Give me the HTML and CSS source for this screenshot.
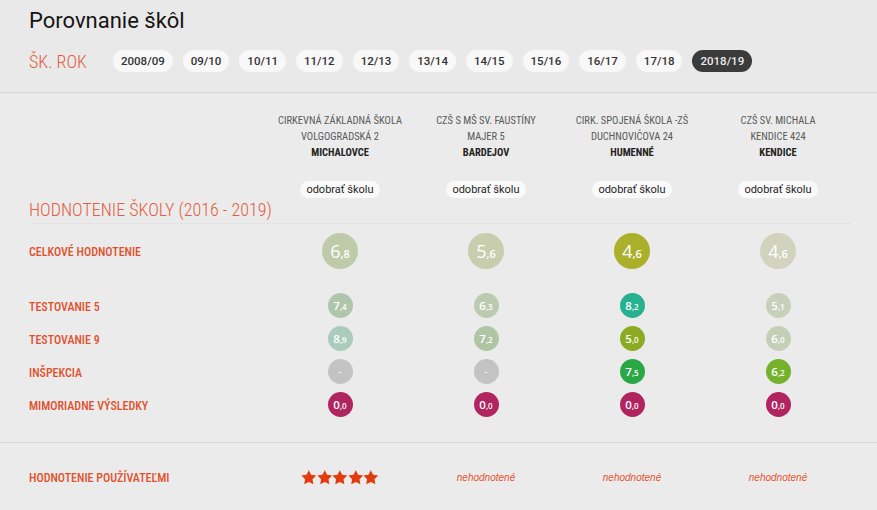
FILE: index.html
```html
<!DOCTYPE html>
<html lang="sk">
<head>
<meta charset="utf-8">
<title>Porovnanie škôl</title>
<link rel="stylesheet" href="styles.css">
</head>
<body>
<header class="top">
  <h1 class="title">Porovnanie škôl</h1>
  <div class="years">
    <span class="years-label">ŠK. ROK</span>
    <ul class="pills">
      <li class="pill">2008/09</li>
      <li class="pill">09/10</li>
      <li class="pill">10/11</li>
      <li class="pill">11/12</li>
      <li class="pill">12/13</li>
      <li class="pill">13/14</li>
      <li class="pill">14/15</li>
      <li class="pill">15/16</li>
      <li class="pill">16/17</li>
      <li class="pill">17/18</li>
      <li class="pill pill-active">2018/19</li>
    </ul>
  </div>
</header>

<main class="compare">
  <div class="grid schools">
    <div class="cell-label"></div>
    <div class="school">
      <span class="school-line">CIRKEVNÁ ZÁKLADNÁ ŠKOLA</span>
      <span class="school-line">VOLGOGRADSKÁ 2</span>
      <span class="school-town">MICHALOVCE</span>
      <button class="remove">odobrať školu</button>
    </div>
    <div class="school">
      <span class="school-line">CZŠ S MŠ SV. FAUSTÍNY</span>
      <span class="school-line">MAJER 5</span>
      <span class="school-town">BARDEJOV</span>
      <button class="remove">odobrať školu</button>
    </div>
    <div class="school">
      <span class="school-line">CIRK. SPOJENÁ ŠKOLA -ZŠ</span>
      <span class="school-line">DUCHNOVIČOVA 24</span>
      <span class="school-town">HUMENNÉ</span>
      <button class="remove">odobrať školu</button>
    </div>
    <div class="school">
      <span class="school-line">CZŠ SV. MICHALA</span>
      <span class="school-line">KENDICE 424</span>
      <span class="school-town">KENDICE</span>
      <button class="remove">odobrať školu</button>
    </div>
  </div>

  <h2 class="section-title">HODNOTENIE ŠKOLY (2016 - 2019)</h2>

  <div class="grid row row-big">
    <div class="cell-label">CELKOVÉ HODNOTENIE</div>
    <div class="cell"><span class="score score-big c-68"><b>6</b><small>,8</small></span></div>
    <div class="cell"><span class="score score-big c-56"><b>5</b><small>,6</small></span></div>
    <div class="cell"><span class="score score-big c-46a"><b>4</b><small>,6</small></span></div>
    <div class="cell"><span class="score score-big c-46b"><b>4</b><small>,6</small></span></div>
  </div>

  <div class="metrics">
    <div class="grid row">
      <div class="cell-label">TESTOVANIE 5</div>
      <div class="cell"><span class="score c-74"><b>7</b><small>,4</small></span></div>
      <div class="cell"><span class="score c-63"><b>6</b><small>,3</small></span></div>
      <div class="cell"><span class="score c-82"><b>8</b><small>,2</small></span></div>
      <div class="cell"><span class="score c-51"><b>5</b><small>,1</small></span></div>
    </div>
    <div class="grid row">
      <div class="cell-label">TESTOVANIE 9</div>
      <div class="cell"><span class="score c-89"><b>8</b><small>,9</small></span></div>
      <div class="cell"><span class="score c-72"><b>7</b><small>,2</small></span></div>
      <div class="cell"><span class="score c-50"><b>5</b><small>,0</small></span></div>
      <div class="cell"><span class="score c-60"><b>6</b><small>,0</small></span></div>
    </div>
    <div class="grid row">
      <div class="cell-label">INŠPEKCIA</div>
      <div class="cell"><span class="score c-none"><small>-</small></span></div>
      <div class="cell"><span class="score c-none"><small>-</small></span></div>
      <div class="cell"><span class="score c-75"><b>7</b><small>,5</small></span></div>
      <div class="cell"><span class="score c-62"><b>6</b><small>,2</small></span></div>
    </div>
    <div class="grid row">
      <div class="cell-label">MIMORIADNE VÝSLEDKY</div>
      <div class="cell"><span class="score c-00"><b>0</b><small>,0</small></span></div>
      <div class="cell"><span class="score c-00"><b>0</b><small>,0</small></span></div>
      <div class="cell"><span class="score c-00"><b>0</b><small>,0</small></span></div>
      <div class="cell"><span class="score c-00"><b>0</b><small>,0</small></span></div>
    </div>
  </div>
</main>

<section class="users">
  <div class="grid row-users">
    <div class="cell-label">HODNOTENIE POUŽÍVATEĽMI</div>
    <div class="cell">
      <span class="stars" aria-label="5 hviezdičiek">
        <svg class="star" viewBox="0 0 16 15"><polygon points="8,0 10.35,4.76 15.61,5.53 11.8,9.24 12.7,14.47 8,12 3.3,14.47 4.2,9.24 0.39,5.53 5.65,4.76"/></svg>
        <svg class="star" viewBox="0 0 16 15"><polygon points="8,0 10.35,4.76 15.61,5.53 11.8,9.24 12.7,14.47 8,12 3.3,14.47 4.2,9.24 0.39,5.53 5.65,4.76"/></svg>
        <svg class="star" viewBox="0 0 16 15"><polygon points="8,0 10.35,4.76 15.61,5.53 11.8,9.24 12.7,14.47 8,12 3.3,14.47 4.2,9.24 0.39,5.53 5.65,4.76"/></svg>
        <svg class="star" viewBox="0 0 16 15"><polygon points="8,0 10.35,4.76 15.61,5.53 11.8,9.24 12.7,14.47 8,12 3.3,14.47 4.2,9.24 0.39,5.53 5.65,4.76"/></svg>
        <svg class="star" viewBox="0 0 16 15"><polygon points="8,0 10.35,4.76 15.61,5.53 11.8,9.24 12.7,14.47 8,12 3.3,14.47 4.2,9.24 0.39,5.53 5.65,4.76"/></svg>
      </span>
    </div>
    <div class="cell"><span class="unrated">nehodnotené</span></div>
    <div class="cell"><span class="unrated">nehodnotené</span></div>
    <div class="cell"><span class="unrated">nehodnotené</span></div>
  </div>
</section>
</body>
</html>
```

FILE: styles.css
```css
* { box-sizing: border-box; }

html, body {
  margin: 0;
  padding: 0;
  background: #ebebeb;
  font-family: Roboto, "Liberation Sans", sans-serif;
  color: #222;
}

.top {
  background: #e9e9e9;
  padding: 8px 29px 20px;
  border-bottom: 1px solid #d5d5d5;
}

.title {
  margin: 0;
  font-size: 22px;
  line-height: 26px;
  font-weight: 400;
  color: #151515;
}

.years {
  margin-top: 16px;
  display: flex;
  align-items: center;
  height: 22px;
}

.years-label {
  width: 84px;
  flex: none;
  font-family: "Roboto Condensed", "Liberation Sans Narrow", Roboto, sans-serif;
  font-size: 18px;
  font-weight: 300;
  color: #e2603f;
}

.pills {
  display: flex;
  gap: 10px;
  margin: 0;
  padding: 0;
  list-style: none;
}

.pill {
  height: 22px;
  line-height: 22px;
  padding: 0 8px;
  border-radius: 11px;
  background: #f8f8f8;
  font-size: 11.5px;
  font-weight: 500;
  color: #333;
}

.pill-active {
  background: #3b3b3b;
  color: #ececec;
}

/* comparison table */
.compare {
  padding: 0 0 21px;
}

.grid {
  display: grid;
  grid-template-columns: 238px repeat(4, 146px);
  padding-left: 29px;
  align-items: center;
}

.cell-label {
  font-family: "Roboto Condensed", "Liberation Sans Narrow", Roboto, sans-serif;
  font-size: 12px;
  font-weight: 500;
  color: #e0512b;
}

.row .cell-label,
.row-users .cell-label {
  padding-top: 2px;
}

.cell {
  display: flex;
  justify-content: center;
  align-items: center;
}

.schools {
  align-items: start;
  padding-top: 20px;
}

.school {
  display: flex;
  flex-direction: column;
  align-items: center;
  text-align: center;
  font-family: "Roboto Condensed", "Liberation Sans Narrow", Roboto, sans-serif;
  font-size: 10.5px;
  line-height: 16px;
  color: #5a5a5a;
}

.school-town {
  font-weight: 700;
  color: #222;
}

.remove {
  margin-top: 20px;
  height: 17px;
  padding: 0 6px;
  border: 0;
  border-radius: 9px;
  background: #fafafa;
  font-family: Roboto, sans-serif;
  font-size: 11px;
  line-height: 17px;
  color: #1e1e1e;
}

.section-title {
  margin: 1px 0 0 29px;
  width: 822px;
  padding-bottom: 2px;
  border-bottom: 1px dotted #dadada;
  font-family: "Roboto Condensed", "Liberation Sans Narrow", Roboto, sans-serif;
  font-size: 18px;
  line-height: 22px;
  font-weight: 300;
  color: #e2603f;
}

.row-big {
  height: 54px;
  margin-bottom: 11px;
}

.row {
  min-height: 33px;
}

.metrics .row {
  height: 33px;
}

/* score bubbles */
.score {
  display: inline-flex;
  align-items: baseline;
  justify-content: center;
  width: 25px;
  height: 25px;
  border-radius: 50%;
  font-family: "Open Sans", sans-serif;
  color: #fff;
  line-height: 25px;
}

.score b {
  font-size: 11.5px;
  font-weight: 600;
}

.score small {
  font-size: 8px;
  font-weight: 600;
}

.score-big {
  width: 36px;
  height: 36px;
  line-height: 36px;
}

.score-big b {
  font-size: 18px;
  font-weight: 500;
}

.score-big small {
  font-size: 11px;
}

.c-68 { background: #bfcaa9; }
.c-56 { background: #c7cdad; }
.c-46a { background: #abb02a; }
.c-46b { background: #d1d3be; }
.c-74 { background: #b0c6ab; }
.c-63 { background: #bccab0; }
.c-82 { background: #28b18f; }
.c-51 { background: #c9d0b9; }
.c-89 { background: #abcbbf; }
.c-72 { background: #b0c5a4; }
.c-50 { background: #8aab22; }
.c-60 { background: #c4cfb8; }
.c-none { background: #c3c3c3; }
.c-75 { background: #2aa845; }
.c-62 { background: #75b22c; }
.c-00 { background: #b0245f; }

/* users rating */
.users {
  border-top: 1px solid #d5d5d5;
  padding: 22px 0;
}

.row-users {
  height: 24px;
}

.stars {
  display: inline-flex;
}

.star {
  width: 15.6px;
  height: 15px;
  fill: #e23c0c;
}

.unrated {
  font-family: "Liberation Sans", Arial, sans-serif;
  font-style: italic;
  font-size: 10px;
  color: #e2542e;
}
```
